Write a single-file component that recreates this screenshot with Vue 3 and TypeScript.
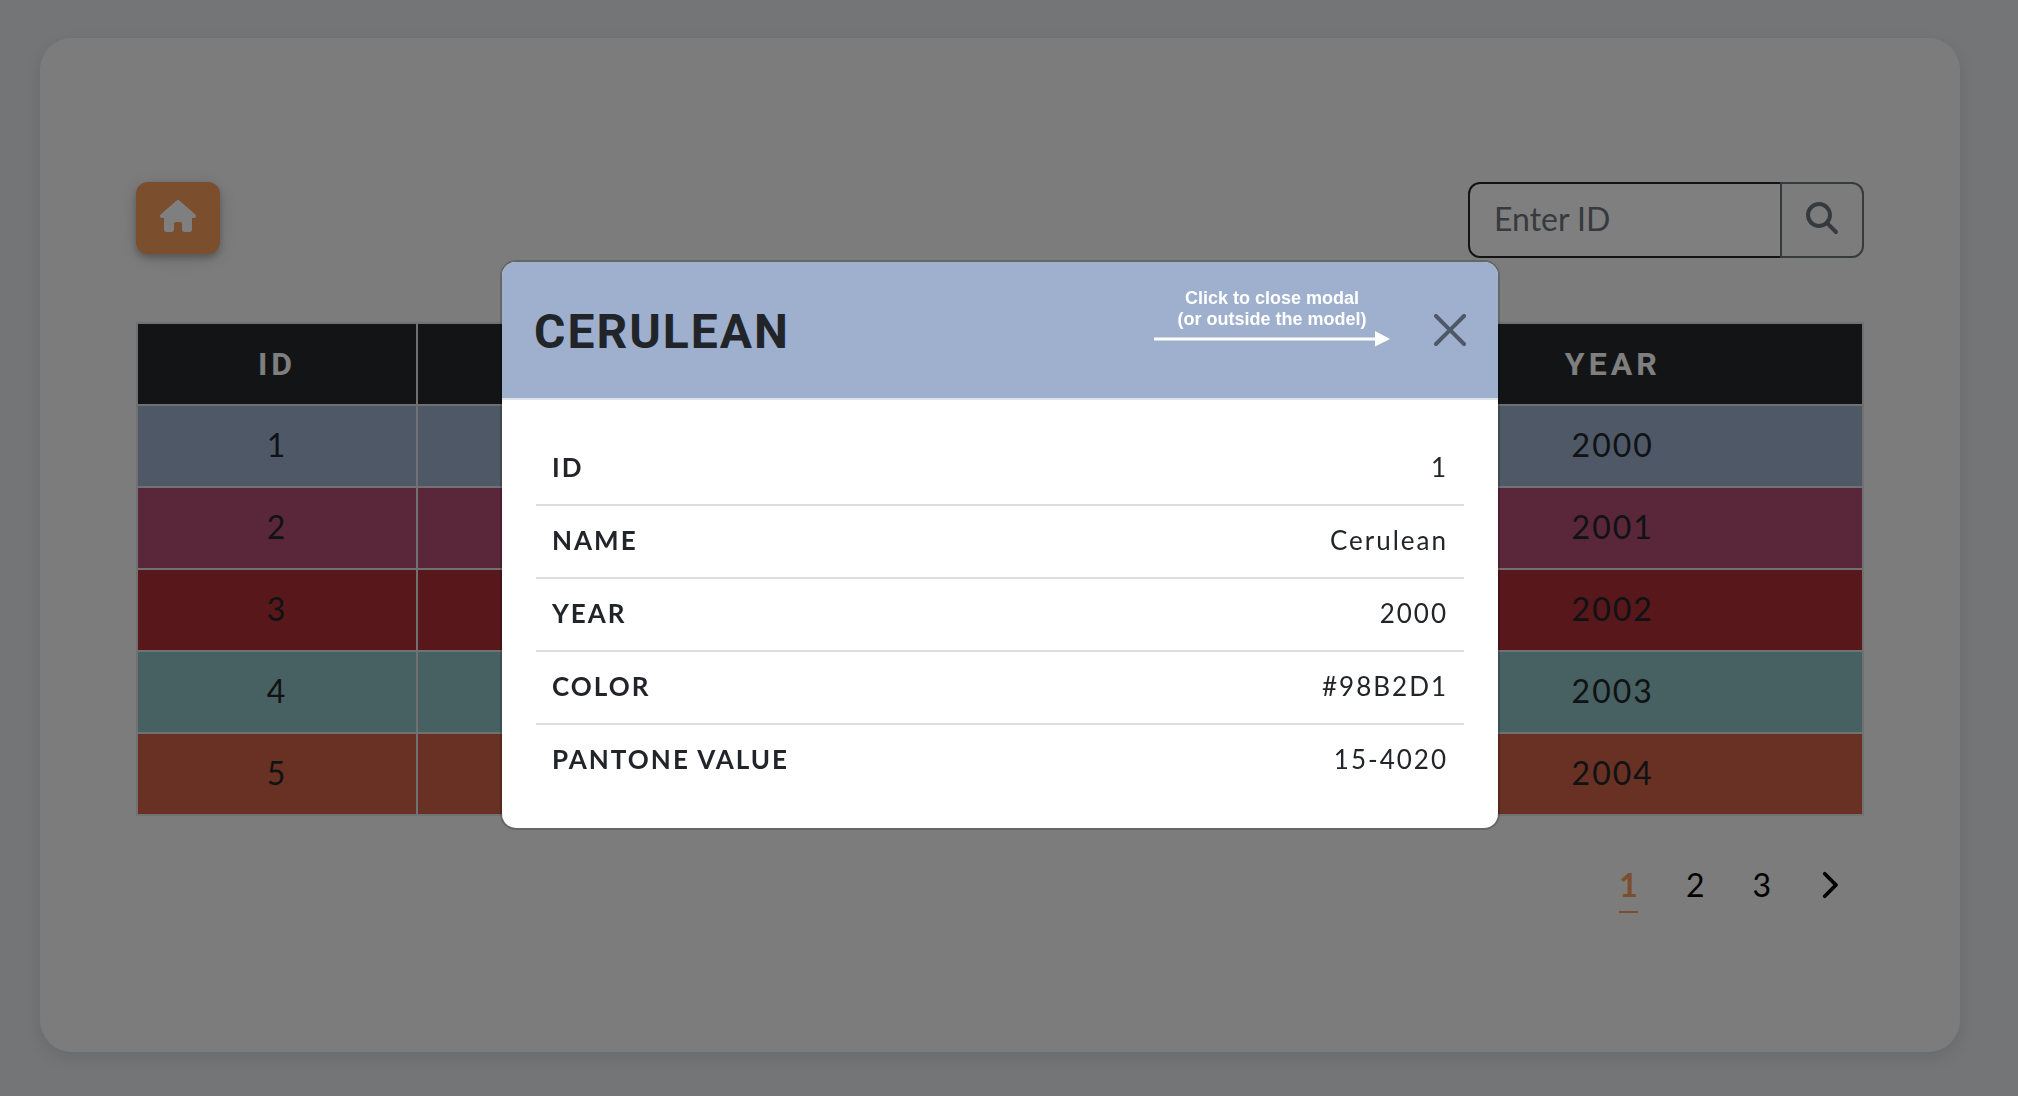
<script setup lang="ts">
import { computed, ref } from 'vue'

interface Swatch {
  id: number
  name: string
  year: number
  hex: string
  fill: string
  pantone: string
}

const swatches: Swatch[] = [
  { id: 1, name: 'Cerulean', year: 2000, hex: '#98B2D1', fill: '#9eb0ce', pantone: '15-4020' },
  { id: 2, name: 'Fuchsia Rose', year: 2001, hex: '#C74375', fill: '#b54c73', pantone: '17-2031' },
  { id: 3, name: 'True Red', year: 2002, hex: '#BF1932', fill: '#ae2e37', pantone: '19-1664' },
  { id: 4, name: 'Aqua Sky', year: 2003, hex: '#7BC4C4', fill: '#8fc1c2', pantone: '14-4811' },
  { id: 5, name: 'Tigerlily', year: 2004, hex: '#E2583E', fill: '#d26048', pantone: '17-1456' },
]

const pages = [1, 2, 3]
const page = ref(1)
const query = ref('')
const selected = ref<Swatch | null>(swatches[0])

const details = computed(() => {
  const s = selected.value
  if (!s) return []
  return [
    { label: 'ID', value: String(s.id) },
    { label: 'NAME', value: s.name },
    { label: 'YEAR', value: String(s.year) },
    { label: 'COLOR', value: s.hex },
    { label: 'PANTONE VALUE', value: s.pantone },
  ]
})
</script>

<template>
  <div class="page">
    <main class="card">
      <div class="toolbar">
        <button class="home" type="button" aria-label="Home">
          <svg viewBox="0 0 576 512" width="36" height="32" fill="currentColor" aria-hidden="true">
            <path d="M575.8 255.5c0 18-15 32.1-32 32.1h-32l.7 160.2c0 2.7-.2 5.4-.5 8.1V472c0 22.1-17.9 40-40 40H456c-1.1 0-2.2 0-3.3-.1c-1.4 .1-2.8 .1-4.2 .1H416 392c-22.1 0-40-17.9-40-40V448 384c0-17.7-14.3-32-32-32H256c-17.7 0-32 14.3-32 32v64 24c0 22.1-17.9 40-40 40H160 128.1c-1.5 0-3-.1-4.5-.2c-1.2 .1-2.4 .2-3.6 .2H104c-22.1 0-40-17.9-40-40V360c0-.9 0-1.9 .1-2.8V287.6H32c-18 0-32-14-32-32.1c0-9 3-17 10-24L266.4 8c7-7 15-8 22-8s15 2 21 7L564.8 231.5c8 7 12 15 11 24z" />
          </svg>
        </button>
        <form class="search" @submit.prevent>
          <input v-model="query" type="text" placeholder="Enter ID" aria-label="Enter ID" />
          <button type="submit" aria-label="Search">
            <svg viewBox="0 0 512 512" width="32" height="32" fill="currentColor" aria-hidden="true">
              <path d="M416 208c0 45.9-14.9 88.3-40 122.7L502.6 457.4c12.5 12.5 12.5 32.8 0 45.3s-32.8 12.5-45.3 0L330.7 376c-34.4 25.2-76.8 40-122.7 40C93.1 416 0 322.9 0 208S93.1 0 208 0S416 93.1 416 208zM208 352a144 144 0 1 0 0-288 144 144 0 1 0 0 288z" />
            </svg>
          </button>
        </form>
      </div>

      <table class="swatches">
        <colgroup>
          <col class="col-id" />
          <col />
          <col class="col-year" />
        </colgroup>
        <thead>
          <tr>
            <th scope="col">ID</th>
            <th scope="col">NAME</th>
            <th scope="col">YEAR</th>
          </tr>
        </thead>
        <tbody>
          <tr v-for="s in swatches" :key="s.id" :style="{ backgroundColor: s.fill }" @click="selected = s">
            <td>{{ s.id }}</td>
            <td>{{ s.name }}</td>
            <td>{{ s.year }}</td>
          </tr>
        </tbody>
      </table>

      <nav class="pager" aria-label="Pages">
        <button
          v-for="p in pages"
          :key="p"
          type="button"
          :class="{ current: p === page }"
          @click="page = p"
        >{{ p }}</button>
        <button class="next" type="button" aria-label="Next page">
          <svg viewBox="0 0 320 512" width="19" height="30" fill="currentColor" aria-hidden="true">
            <path d="M310.6 233.4c12.5 12.5 12.5 32.8 0 45.3l-192 192c-12.5 12.5-32.8 12.5-45.3 0s-12.5-32.8 0-45.3L242.7 256 73.4 86.6c-12.5-12.5-12.5-32.8 0-45.3s32.8-12.5 45.3 0l192 192z" />
          </svg>
        </button>
      </nav>
    </main>

    <div v-if="selected" class="backdrop" @click.self="selected = null">
      <section class="modal" role="dialog" aria-modal="true" aria-labelledby="modal-title">
        <header class="modal-head" :style="{ backgroundColor: selected.fill }">
          <h2 id="modal-title">{{ selected.name.toUpperCase() }}</h2>
          <div class="hint">
            <p>Click to close modal<br />(or outside the model)</p>
            <svg viewBox="0 0 236 16" width="236" height="16" fill="#fff" aria-hidden="true">
              <path d="M0 6.500H221V0L236 8L221 15.500V9.500H0z" />
            </svg>
          </div>
          <button class="close" type="button" aria-label="Close" @click="selected = null">
            <svg viewBox="0 0 16 16" width="32" height="32" fill="currentColor" aria-hidden="true">
              <path d="M.293.293a1 1 0 011.414 0L8 6.586 14.293.293a1 1 0 111.414 1.414L9.414 8l6.293 6.293a1 1 0 01-1.414 1.414L8 9.414l-6.293 6.293a1 1 0 01-1.414-1.414L6.586 8 .293 1.707a1 1 0 010-1.414z" />
            </svg>
          </button>
        </header>
        <dl class="modal-body">
          <div v-for="d in details" :key="d.label" class="detail">
            <dt>{{ d.label }}</dt>
            <dd>{{ d.value }}</dd>
          </div>
        </dl>
      </section>
    </div>
  </div>
</template>

<style>
body {
  background: #e9ebee;
}
</style>

<style scoped>
.page,
.page * {
  box-sizing: border-box;
}

.page {
  display: flex;
  min-height: 100vh;
  padding: 38px 58px 44px 40px;
  color: #212529;
  font-family: Lato, 'Noto Sans', sans-serif;
  font-size: 32px;
}

button {
  margin: 0;
  padding: 0;
  border: 0;
  background: none;
  color: inherit;
  font: inherit;
  cursor: pointer;
}

svg {
  display: block;
}

.card {
  flex: 1;
  min-width: 0;
  padding: 144px 96px 96px;
  border-radius: 32px;
  background: #f9f9f9;
  box-shadow: 0 6px 20px rgba(0, 0, 0, 0.1);
}

.toolbar {
  display: flex;
  align-items: flex-start;
  justify-content: space-between;
  margin-bottom: 64px;
}

.home {
  display: flex;
  justify-content: center;
  width: 84px;
  height: 72px;
  padding-top: 18px;
  border-radius: 12px;
  background: #f69c5c;
  box-shadow: 0 4px 6px rgba(0, 0, 0, 0.22), 0 4px 20px rgba(0, 0, 0, 0.14);
  color: #fff;
}

.search {
  display: flex;
}

.search input {
  width: 314px;
  height: 76px;
  padding: 0 24px 4px;
  border: 2px solid #262626;
  border-radius: 12px 0 0 12px;
  background: #fff;
  color: #212529;
  font: inherit;
  outline: none;
}

.search input::placeholder {
  color: #6c757d;
  opacity: 1;
}

.search button {
  display: flex;
  justify-content: center;
  width: 84px;
  height: 76px;
  margin-left: -2px;
  padding-top: 18px;
  border: 2px solid #6c757d;
  border-radius: 0 12px 12px 0;
  background: #f9f9f9;
  color: #6c757d;
}

.swatches {
  width: 100%;
  border-collapse: collapse;
  table-layout: fixed;
  text-align: center;
}

.col-id {
  width: 280px;
}

.col-year {
  width: 29%;
}

.swatches th,
.swatches td {
  height: 82px;
  padding: 0;
  border: 2px solid #dee2e6;
  line-height: 40px;
}

.swatches td {
  padding-bottom: 2px;
  letter-spacing: 2px;
}

.swatches th {
  background: #24282b;
  color: #fff;
  font-family: Roboto, sans-serif;
  font-weight: 700;
  letter-spacing: 4px;
}

.pager {
  display: flex;
  justify-content: flex-end;
  gap: 48px;
  margin-top: 46px;
  padding-right: 26px;
}

.pager button {
  height: 51px;
  padding-bottom: 4px;
  border-bottom: 2px solid transparent;
  color: #000;
  line-height: 45px;
}

.pager .current {
  border-color: #f69c5c;
  color: #f69c5c;
  font-weight: 700;
}

.pager .next {
  display: flex;
  align-items: center;
}

.backdrop {
  position: fixed;
  inset: 0;
  display: flex;
  align-items: center;
  justify-content: center;
  padding: 0 18px 6px 0;
  background: rgba(0, 0, 0, 0.5);
}

.modal {
  width: 1000px;
  max-width: 100%;
  overflow: hidden;
  border: 2px solid rgba(0, 0, 0, 0.18);
  border-radius: 16px;
  background: #fff;
  background-clip: padding-box;
}

.modal-head {
  display: flex;
  align-items: center;
  height: 138px;
  padding: 24px 32px;
  border-bottom: 2px solid #dee2e6;
}

.modal-head h2 {
  margin: 0 auto 0 0;
  padding-top: 4px;
  font-family: Roboto, sans-serif;
  font-size: 48px;
  font-weight: 700;
  letter-spacing: 2px;
  line-height: 60px;
}

.hint {
  align-self: flex-start;
  margin-right: 44px;
  padding-top: 2px;
  color: #fff;
  font-family: 'Liberation Sans', Arial, sans-serif;
  font-size: 18px;
  font-weight: 700;
  line-height: 21px;
  text-align: center;
}

.hint p {
  margin: 0 0 1px;
}

.close {
  opacity: 0.5;
  color: #000;
}

.modal-body {
  margin: 0;
  padding: 33px 34px 32px;
}

.detail {
  display: flex;
  justify-content: space-between;
  padding: 15px 16px 17px;
  border-bottom: 2px solid #dcdddf;
  font-size: 26px;
  letter-spacing: 2px;
  line-height: 39px;
}

.detail:last-child {
  border-bottom: 0;
}

.detail dt {
  font-weight: 700;
}

.detail dd {
  margin: 0;
}
</style>
